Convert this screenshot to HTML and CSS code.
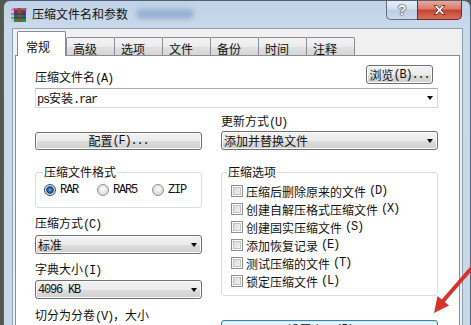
FILE: index.html
```html
<!DOCTYPE html>
<html lang="zh-CN">
<head>
<meta charset="utf-8">
<title>压缩文件名和参数</title>
<link rel="stylesheet" href="styles.css">
</head>
<body>
<div class="window">
  <div class="titlebar">
    <svg class="app-icon" width="18" height="16" viewBox="0 0 18 16">
      <path d="M1 3 L4 1 L17 1 L16 3 Z" fill="#b0588e"/>
      <rect x="1" y="3" width="15" height="4" fill="#8a2a68"/>
      <rect x="1" y="7" width="15" height="4" fill="#2b5ba6"/>
      <rect x="1" y="11" width="15" height="4" fill="#2f8a3a"/>
      <rect x="1" y="3" width="3" height="12" fill="#efe8d8" opacity="0.75"/>
      <rect x="8" y="1" width="3" height="14" fill="#7a5a34"/>
      <path d="M1 7 H16 M1 11 H16" stroke="#222" stroke-width="0.6"/>
    </svg>
    <span class="title">压缩文件名和参数</span>
    <span class="blurred"></span>
    <div class="caption-btns">
      <div class="cbtn help">?</div>
      <div class="cbtn close">
        <svg width="13" height="10" viewBox="0 0 13 10">
          <path d="M1 0.5 H4 L6.5 3.3 L9 0.5 H12 L8.2 5 L12 9.5 H9 L6.5 6.7 L4 9.5 H1 L4.8 5 Z" fill="#fff" stroke="#5a1f1a" stroke-width="0.8"/>
        </svg>
      </div>
    </div>
  </div>

  <div class="client">
    <div class="tabs">
      <div class="tab active">常规</div>
      <div class="tab">高级</div>
      <div class="tab">选项</div>
      <div class="tab">文件</div>
      <div class="tab">备份</div>
      <div class="tab">时间</div>
      <div class="tab">注释</div>
    </div>

    <div class="panel">
      <div class="row-top">
        <span class="lbl lbl-low">压缩文件名<span class="l">(A)</span></span>
        <div class="btn browse">浏览<span class="l">(B)...</span></div>
      </div>
      <div class="edit-combo">
        <span><span class="l">ps</span>安装<span class="l">.rar</span></span>
        <i class="arrow"></i>
      </div>

      <div class="grid row2">
        <div class="btn config">配置<span class="l">(F)...</span></div>
        <div class="col">
          <span class="lbl mt5">更新方式<span class="l">(U)</span></span>
          <div class="combo"><span>添加并替换文件</span><i class="arrow"></i></div>
        </div>
      </div>

      <div class="grid row3">
        <div class="col">
          <fieldset class="group group-left">
            <legend>压缩文件格式</legend>
            <div class="radios">
              <div class="ri"><span class="radio checked"></span><span class="l">RAR</span></div>
              <div class="ri"><span class="radio"></span><span class="l">RAR5</span></div>
              <div class="ri"><span class="radio"></span><span class="l">ZIP</span></div>
            </div>
          </fieldset>
          <span class="lbl mt7">压缩方式<span class="l">(C)</span></span>
          <div class="combo mt2"><span>标准</span><i class="arrow"></i></div>
          <span class="lbl mt7">字典大小<span class="l">(I)</span></span>
          <div class="combo mt1"><span class="l">4096 KB</span><i class="arrow"></i></div>
          <span class="lbl mt8">切分为分卷<span class="l">(V)</span>，大小</span>
          <div class="split">
            <div class="textbox"></div>
            <div class="combo small"><i class="arrow"></i></div>
          </div>
        </div>
        <div class="col">
          <fieldset class="group group-right">
            <legend>压缩选项</legend>
            <div class="cb"><span class="box"></span>压缩后删除原来的文件<span class="l">(D)</span></div>
            <div class="cb"><span class="box"></span>创建自解压格式压缩文件<span class="l">(X)</span></div>
            <div class="cb"><span class="box"></span>创建固实压缩文件<span class="l">(S)</span></div>
            <div class="cb"><span class="box"></span>添加恢复记录<span class="l">(E)</span></div>
            <div class="cb"><span class="box"></span>测试压缩的文件<span class="l">(T)</span></div>
            <div class="cb"><span class="box"></span>锁定压缩文件<span class="l">(L)</span></div>
          </fieldset>
          <div class="btn default">设置密码<span class="l">(P)...</span></div>
        </div>
      </div>
    </div>
  </div>
</div>

<svg class="red-arrow" width="471" height="325" viewBox="0 0 471 325">
  <line x1="476" y1="263" x2="443" y2="301" stroke="#d8322e" stroke-width="4" stroke-linecap="round"/>
  <polygon points="434,313 437.5,296 449,305.5" fill="#d8322e"/>
</svg>
</body>
</html>
```

FILE: styles.css
```css
* { box-sizing: border-box; }
html, body { margin: 0; padding: 0; }
body {
  width: 471px;
  height: 325px;
  overflow: hidden;
  position: relative;
  background: #55584c;
  font-family: "Noto Sans CJK SC", "Microsoft YaHei", sans-serif;
  font-size: 12px;
  color: #111;
}
.l {
  font-family: "Liberation Mono", monospace;
  letter-spacing: -1.2px;
}

.window {
  margin-left: 3px;
  width: 468px;
  height: 360px;
  background: linear-gradient(180deg, #c0d2e7 0, #cbdaeb 30px, #c9d8e8 100%);
  border: 1px solid #4f6277;
  border-radius: 7px 7px 0 0;
  overflow: hidden;
}

.titlebar {
  height: 27px;
  display: flex;
  align-items: flex-start;
}
.app-icon { margin: 6px 0 0 6px; flex: none; }
.title {
  margin: 5px 0 0 4px;
  line-height: 16px;
  font-size: 12px;
  color: #111;
}
.blurred {
  margin: 8px 0 0 8px;
  width: 58px;
  height: 10px;
  border-radius: 5px;
  background: rgba(110, 140, 185, 0.5);
  filter: blur(2.5px);
}
.caption-btns {
  margin-left: auto;
  margin-right: 8px;
  display: flex;
  height: 19px;
}
.cbtn {
  height: 19px;
  border: 1px solid #5d6e86;
  border-top: 0;
  display: flex;
  align-items: center;
  justify-content: center;
}
.help {
  width: 31px;
  border-radius: 0 0 0 5px;
  background: linear-gradient(180deg, #e4ecf6 0, #d3dfee 45%, #bccde3 50%, #cbd9ea 100%);
  font-family: "Liberation Sans", sans-serif;
  font-weight: bold;
  font-size: 14px;
  color: #fff;
  text-shadow: 0 0 1px #2d3a4c, 0 0 1px #2d3a4c, 0 0 2px #3c4c64;
  border-right: 0;
}
.close {
  width: 45px;
  border-radius: 0 0 5px 0;
  border-color: #6d2a22;
  background: linear-gradient(180deg, #e9a99a 0, #d97a68 45%, #c4432f 50%, #d6705c 100%);
}

.client {
  margin: 0 7px 0 8px;
  height: 340px;
  background: #f0f0f0;
  border: 1px solid #8b9fb6;
}

.tabs {
  margin-top: 2px;
  padding-left: 4px;
  height: 24px;
  display: flex;
  align-items: flex-end;
}
.tab {
  width: 49px;
  height: 18px;
  margin-left: -1px;
  padding: 4px 0 0 6px;
  line-height: 14px;
  border: 1px solid #898c95;
  border-bottom: 0;
  border-radius: 2px 2px 0 0;
  background: linear-gradient(180deg, #f4f4f4 0, #ececec 50%, #e0e0e0 51%, #d6d6d6 100%);
}
.tab.active {
  margin-left: 0;
  width: 49px;
  height: 25px;
  margin-bottom: -1px;
  padding: 8px 0 0 8px;
  background: #fff;
  position: relative;
  z-index: 1;
}
.tab.active + .tab { margin-left: 0; }

.panel {
  margin: 0 2px;
  height: 300px;
  background: #fff;
  border: 1px solid #898c95;
  padding: 0 21px 0 19px;
}

.lbl { display: block; line-height: 16px; white-space: nowrap; }
.lbl-low { margin-bottom: -3px; }
.mt1 { margin-top: 1px; }
.mt2 { margin-top: 2px; }
.mt5 { margin-top: 5px; }
.mt7 { margin-top: 7px; }
.mt8 { margin-top: 8px; }

.row-top {
  margin-top: 9px;
  height: 19px;
  display: flex;
  justify-content: space-between;
  align-items: flex-end;
}

.btn {
  display: flex;
  align-items: center;
  justify-content: center;
  border: 1px solid #707070;
  border-radius: 3px;
  background: linear-gradient(180deg, #f2f2f2 0, #ebebeb 50%, #dddddd 51%, #cfcfcf 100%);
  box-shadow: inset 0 0 0 1px #fbfbfb;
  white-space: nowrap;
  line-height: 16px;
}
.browse { width: 67px; height: 19px; margin-right: 5px; }
.config { height: 18px; }
.default {
  margin-top: 24px;
  height: 22px;
  align-items: flex-start;
  padding-top: 1px;
  border-color: #3c7fb1;
  background: linear-gradient(180deg, #eaf6fd 0, #d9f0fc 50%, #bee6fd 51%, #a7d9f5 100%);
  box-shadow: inset 0 0 0 1px #c8f0fc;
}

.edit-combo {
  margin-top: 4px;
  height: 20px;
  display: flex;
  align-items: center;
  padding-left: 1px;
  border: 1px solid #d6d9df;
  border-top-color: #abadb3;
  background: #fff;
  white-space: nowrap;
}
.combo {
  height: 19px;
  display: flex;
  align-items: center;
  padding-left: 2px;
  border: 1px solid #707070;
  border-radius: 3px;
  background: linear-gradient(180deg, #f2f2f2 0, #ebebeb 50%, #dddddd 51%, #cfcfcf 100%);
  box-shadow: inset 0 0 0 1px #fbfbfb;
  white-space: nowrap;
  line-height: 16px;
}
.arrow {
  margin-left: auto;
  margin-right: 4px;
  width: 0;
  height: 0;
  border-left: 3.5px solid transparent;
  border-right: 3.5px solid transparent;
  border-top: 4px solid #000;
}
.edit-combo .arrow { margin-right: 4px; }

.grid {
  display: grid;
  grid-template-columns: 167px 217px;
  column-gap: 19px;
}
.row2 { align-items: end; }
.row3 { align-items: start; margin-top: 14px; }
.col { display: flex; flex-direction: column; }

.group {
  margin: 0;
  border: 1px solid #d5dfe5;
  border-radius: 3px;
  min-inline-size: 0;
}
.group legend {
  padding: 0 1px;
  line-height: 16px;
}
.group-left { padding: 3px 8px 10px 8px; }
.group-left legend { margin-left: -1px; }
.group-right { padding: 2px 9px 5px 9px; }
.group-right legend { margin-left: -4px; }

.radios {
  display: grid;
  grid-template-columns: 53px 55px auto;
  line-height: 14px;
}
.ri { display: flex; align-items: center; gap: 4px; }
.radio {
  width: 12px;
  height: 12px;
  border-radius: 50%;
  border: 1px solid #8e8f8f;
  background: radial-gradient(circle at 50% 40%, #fbfbfb 0, #e2e2e2 55%, #cfcfcf 100%);
  flex: none;
}
.radio.checked {
  border-color: #2c4f72;
  background: radial-gradient(circle at 50% 50%, #7fb0e0 0, #2f68a3 2px, #15365c 3.3px, #d8dde4 4.2px, #eeeeee 100%);
}

.cb {
  height: 18px;
  display: flex;
  align-items: center;
  gap: 3px;
  white-space: nowrap;
}
.box {
  width: 12px;
  height: 12px;
  flex: none;
  border: 1px solid #8f8f8f;
  background: linear-gradient(135deg, #d4d4d4 0, #eeeeee 70%, #f8f8f8 100%);
  box-shadow: inset 0 0 0 1px #fff, inset 0 0 0 2px #c3c3c3;
}

.split {
  margin-top: 1px;
  display: flex;
  gap: 5px;
}
.textbox {
  width: 118px;
  height: 20px;
  background: #fff;
  border: 1px solid #d6d9df;
  border-top-color: #abadb3;
}
.combo.small { width: 44px; height: 20px; }

.red-arrow {
  position: absolute;
  left: 0;
  top: 0;
  pointer-events: none;
}
```
